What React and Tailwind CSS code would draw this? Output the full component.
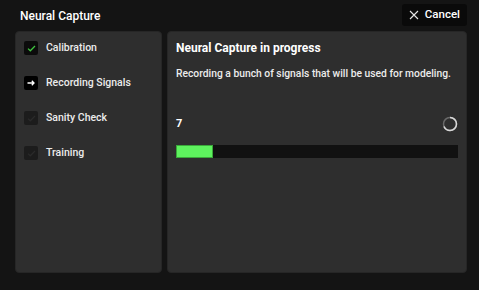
import React from 'react';

const steps = [
  { label: 'Calibration', state: 'done' },
  { label: 'Recording Signals', state: 'active' },
  { label: 'Sanity Check', state: 'pending' },
  { label: 'Training', state: 'pending' },
];

function StepBox({ state }) {
  if (state === 'active') {
    return (
      <div className="w-[14px] h-[14px] rounded-[2px] bg-black flex items-center justify-center">
        <svg width="8" height="6" viewBox="0 0 8 6" fill="none">
          <path d="M0.5 3H7M4.8 0.8L7 3L4.8 5.2" stroke="white" strokeWidth="1.3" />
        </svg>
      </div>
    );
  }
  const color = state === 'done' ? '#3fc43f' : '#2a2a2a';
  return (
    <div className={`w-[14px] h-[14px] rounded-[2px] flex items-center justify-center ${state === 'done' ? 'bg-[#0b0b0b]' : 'bg-[#1c1c1c]'}`}>
      <svg width="9" height="7" viewBox="0 0 9 7" fill="none">
        <path d="M1 3.6L3.3 5.8L8 1" stroke={color} strokeWidth="1.3" />
      </svg>
    </div>
  );
}

export default function App() {
  return (
    <div className="w-[479px] h-[290px] bg-[#141414] text-white flex flex-col pl-[15px] pr-[12px] pb-[17px] font-['Roboto',sans-serif]">
      <div className="h-[31px] flex items-center justify-between">
        <span className="pl-[5px] text-[12px] font-medium">Neural Capture</span>
        <button className="h-[22px] -mt-[1px] px-[7px] rounded-[3px] bg-[#0a0a0a] flex items-center gap-[6px] text-[11.5px] font-medium">
          <svg width="10" height="10" viewBox="0 0 10 10" fill="none">
            <path d="M1 1L9 9M9 1L1 9" stroke="#e5e5e5" strokeWidth="1.1" />
          </svg>
          Cancel
        </button>
      </div>
      <div className="flex-1 flex gap-[5px]">
        <div className="w-[147px] bg-[#2e2e2e] rounded-[4px] border border-[#262626] pt-[9px] flex flex-col">
          {steps.map((s) => (
            <div key={s.label} className="h-[35px] flex items-start pl-[8px]">
              <div className="h-[14px] flex items-center gap-[8px]">
                <StepBox state={s.state} />
                <span className="text-[10.5px] font-medium text-[#ececec]">{s.label}</span>
              </div>
            </div>
          ))}
        </div>
        <div className="flex-1 bg-[#2e2e2e] rounded-[4px] border border-[#262626] px-[8px] pt-[8px] flex flex-col">
          <div className="text-[12px] font-bold leading-[16px]">Neural Capture in progress</div>
          <div className="mt-[11px] text-[10.3px] font-medium leading-[14px] text-[#ececec] whitespace-nowrap">
            Recording a bunch of signals that will be used for modeling.
          </div>
          <div className="mt-[35px] flex items-center justify-between h-[16px]">
            <span className="text-[11px] font-bold">7</span>
            <svg width="16" height="16" viewBox="0 0 16 16" fill="none">
              <circle cx="8" cy="8" r="6.5" stroke="#6a6a6a" strokeWidth="1.5" />
              <path d="M8 1.5A6.5 6.5 0 0 1 14.5 8A6.5 6.5 0 0 1 8 14.5A6.5 6.5 0 0 1 2 10.5" stroke="#d8d8d8" strokeWidth="1.5" />
            </svg>
          </div>
          <div className="mt-[13px] h-[13px] bg-[#111111] flex">
            <div className="h-full w-[37px] bg-[#5ef25e] border border-[#3aa83a]" />
          </div>
        </div>
      </div>
    </div>
  );
}
